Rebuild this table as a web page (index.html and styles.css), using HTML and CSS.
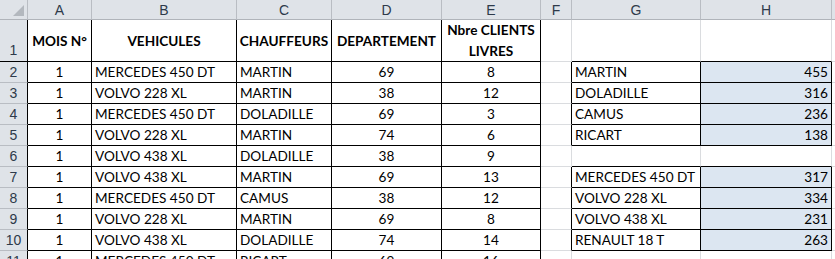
FILE: index.html
```html
<!DOCTYPE html>
<html>
<head>
<meta charset="utf-8">
<link rel="stylesheet" href="styles.css">
</head>
<body>
<div class="sheet">
  <div class="ch corner"><span class="tri"></span></div>
  <div class="ch">A</div><div class="ch">B</div><div class="ch">C</div><div class="ch">D</div><div class="ch">E</div><div class="ch">F</div><div class="ch">G</div><div class="ch">H</div><div class="ch last"></div>

  <div class="rh tall kb">1</div>
  <div class="c h kr">MOIS N°</div>
  <div class="c h kr">VEHICULES</div>
  <div class="c h kr">CHAUFFEURS</div>
  <div class="c h kr">DEPARTEMENT</div>
  <div class="c h kr wrap">Nbre CLIENTS LIVRES</div>
  <div class="c e"></div><div class="c kb"></div><div class="c kb"></div><div class="c e"></div>

  <div class="rh">2</div>
  <div class="c k ctr">1</div><div class="c k">MERCEDES 450 DT</div><div class="c k">MARTIN</div><div class="c k ctr">69</div><div class="c k ctr">8</div>
  <div class="c kr"></div><div class="c k">MARTIN</div><div class="c k blue num">455</div><div class="c e"></div>

  <div class="rh">3</div>
  <div class="c k ctr">1</div><div class="c k">VOLVO 228 XL</div><div class="c k">MARTIN</div><div class="c k ctr">38</div><div class="c k ctr">12</div>
  <div class="c kr"></div><div class="c k">DOLADILLE</div><div class="c k blue num">316</div><div class="c e"></div>

  <div class="rh">4</div>
  <div class="c k ctr">1</div><div class="c k">MERCEDES 450 DT</div><div class="c k">DOLADILLE</div><div class="c k ctr">69</div><div class="c k ctr">3</div>
  <div class="c kr"></div><div class="c k">CAMUS</div><div class="c k blue num">236</div><div class="c e"></div>

  <div class="rh">5</div>
  <div class="c k ctr">1</div><div class="c k">VOLVO 228 XL</div><div class="c k">MARTIN</div><div class="c k ctr">74</div><div class="c k ctr">6</div>
  <div class="c kr"></div><div class="c k">RICART</div><div class="c k blue num">138</div><div class="c e"></div>

  <div class="rh">6</div>
  <div class="c k ctr">1</div><div class="c k">VOLVO 438 XL</div><div class="c k">DOLADILLE</div><div class="c k ctr">38</div><div class="c k ctr">9</div>
  <div class="c e"></div><div class="c kb"></div><div class="c kb"></div><div class="c e"></div>

  <div class="rh">7</div>
  <div class="c k ctr">1</div><div class="c k">VOLVO 438 XL</div><div class="c k">MARTIN</div><div class="c k ctr">69</div><div class="c k ctr">13</div>
  <div class="c kr"></div><div class="c k">MERCEDES 450 DT</div><div class="c k blue num">317</div><div class="c e"></div>

  <div class="rh">8</div>
  <div class="c k ctr">1</div><div class="c k">MERCEDES 450 DT</div><div class="c k">CAMUS</div><div class="c k ctr">38</div><div class="c k ctr">12</div>
  <div class="c kr"></div><div class="c k">VOLVO 228 XL</div><div class="c k blue num">334</div><div class="c e"></div>

  <div class="rh">9</div>
  <div class="c k ctr">1</div><div class="c k">VOLVO 228 XL</div><div class="c k">MARTIN</div><div class="c k ctr">69</div><div class="c k ctr">8</div>
  <div class="c kr"></div><div class="c k">VOLVO 438 XL</div><div class="c k blue num">231</div><div class="c e"></div>

  <div class="rh">10</div>
  <div class="c k ctr">1</div><div class="c k">VOLVO 438 XL</div><div class="c k">DOLADILLE</div><div class="c k ctr">74</div><div class="c k ctr">14</div>
  <div class="c kr"></div><div class="c k">RENAULT 18 T</div><div class="c k blue num">263</div><div class="c e"></div>

  <div class="rh">11</div>
  <div class="c k ctr">1</div><div class="c k">MERCEDES 450 DT</div><div class="c k">RICART</div><div class="c k ctr">69</div><div class="c k ctr">16</div>
  <div class="c e"></div><div class="c e"></div><div class="c e"></div><div class="c e"></div>
</div>
</body>
</html>
```
FILE: styles.css
```css
html, body {
  margin: 0;
  padding: 0;
  background: #ffffff;
  overflow: hidden;
}
.sheet {
  display: grid;
  grid-template-columns: 28px 64px 145px 95px 110px 99px 31px 129px 131px 3px;
  grid-template-rows: 20px 42px repeat(10, 21px);
  height: 259px;
  overflow: hidden;
  font-family: "Lato", "Liberation Sans", sans-serif;
  font-size: 13.6px;
  color: #000;
}
.ch {
  background: #dfe3e8;
  border-right: 1px solid #b9bdc3;
  border-bottom: 1px solid #b0b4ba;
  font-family: "Liberation Sans", Arial, sans-serif;
  font-size: 14px;
  color: #2e3a4a;
  display: flex;
  align-items: center;
  justify-content: center;
  line-height: 1;
}
.ch.last { border-right: none; }
.corner { position: relative; }
.tri {
  position: absolute;
  right: 3px;
  bottom: 3px;
  width: 0;
  height: 0;
  border-left: 11px solid transparent;
  border-bottom: 11px solid #b3b8be;
}
.rh {
  background: #dfe3e8;
  border-right: 1px solid #000;
  border-bottom: 1px solid #b9bdc3;
  font-family: "Liberation Sans", Arial, sans-serif;
  font-size: 14px;
  color: #2e3a4a;
  display: flex;
  align-items: center;
  justify-content: center;
}
.rh.tall { align-items: flex-end; padding-bottom: 3px; box-sizing: border-box; }
.c {
  border-right: 1px solid #dadcdf;
  border-bottom: 1px solid #dadcdf;
  display: flex;
  align-items: flex-end;
  padding: 0 3px 1px 3px;
  white-space: nowrap;
  overflow: hidden;
  line-height: 18px;
}
.k { border-right-color: #000; border-bottom-color: #000; }
.kr { border-right-color: #000; }
.kb { border-bottom-color: #000; }
.h {
  font-weight: 700;
  justify-content: center;
  align-items: center;
  padding: 0 2px;
  border-bottom-color: #000;
}
.wrap {
  white-space: normal;
  text-align: center;
  line-height: 21px;
}
.ctr { justify-content: center; }
.num { justify-content: flex-end; }
.blue { background: #dce6f1; }
.e { }
```
